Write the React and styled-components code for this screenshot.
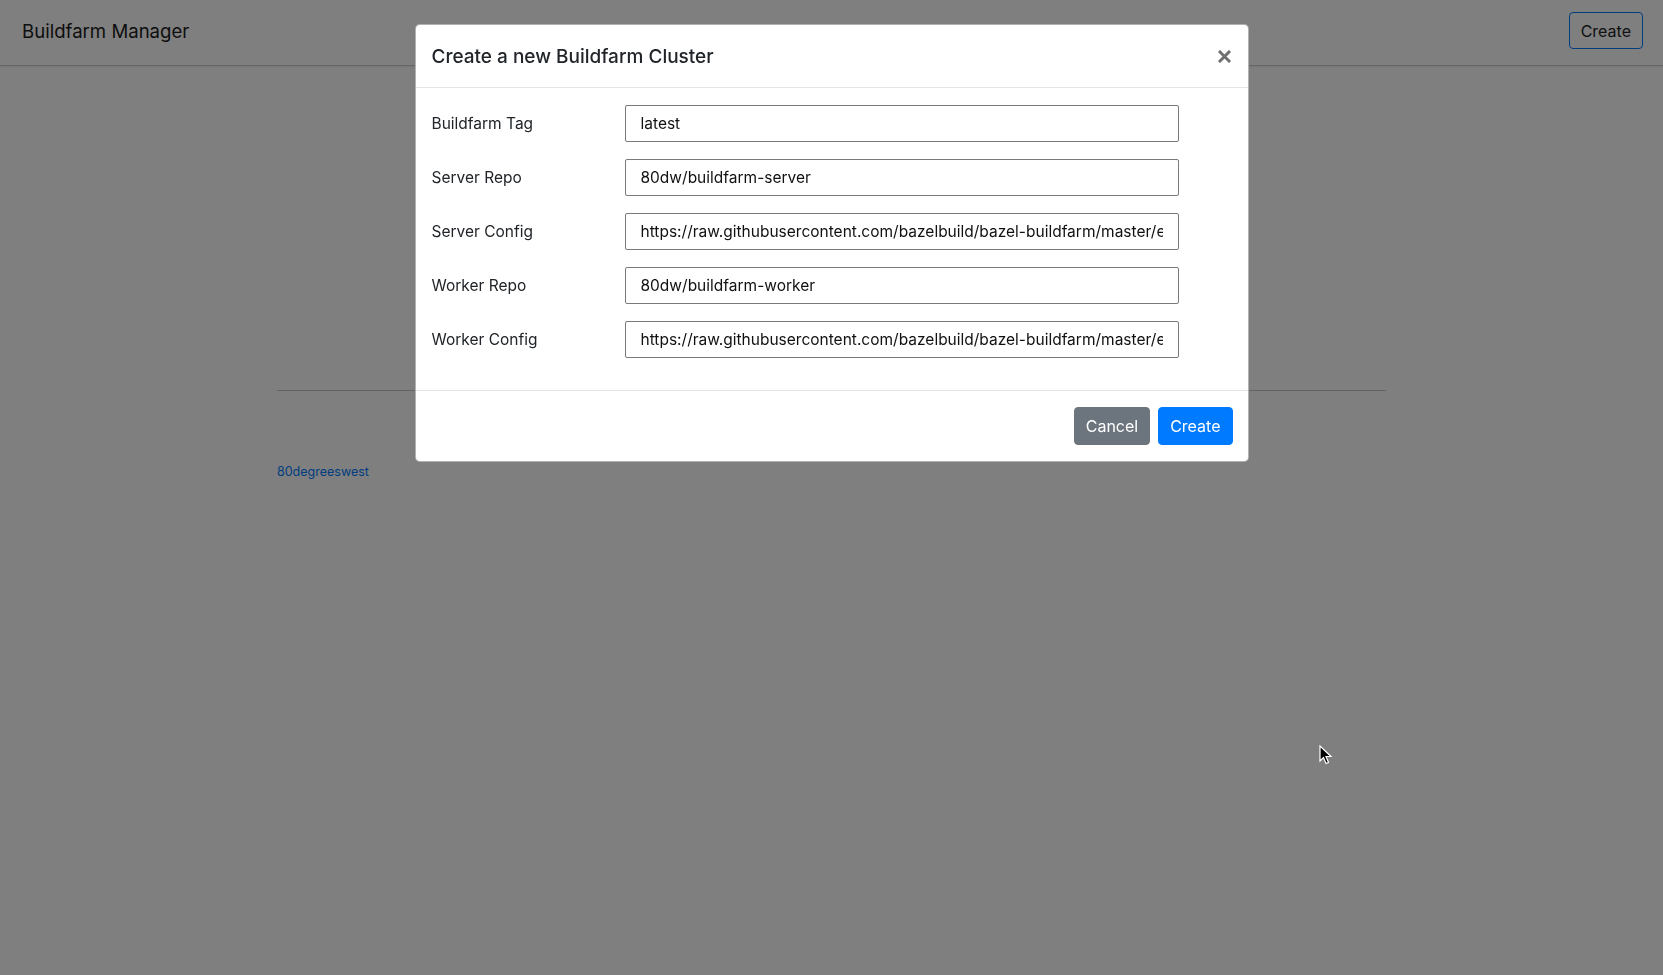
import React from "react";
import styled, { createGlobalStyle } from "styled-components";

const Global = createGlobalStyle`
  html, body { margin: 0; padding: 0; background: #fff; }
  body {
    font-family: Inter, "Noto Sans", "Liberation Sans", sans-serif;
    color: #212529;
    -webkit-font-smoothing: antialiased;
  }
  * { box-sizing: border-box; }
`;

const Page = styled.div`
  min-height: 975px;
  background: #fff;
`;

const Navbar = styled.header`
  height: 66px;
  display: flex;
  align-items: center;
  justify-content: space-between;
  padding: 0 20px 0 22px;
  border-bottom: 1px solid #c8c8c8;
  box-shadow: 0 1px 3px rgba(0, 0, 0, 0.08);
`;

const Brand = styled.div`
  font-size: 18.6px;
  margin-top: -3px;
  color: #1c1c1c;
`;

const Button = styled.button`
  font-family: inherit;
  font-size: 16px;
  height: ${(p) => (p.$tall ? 38 : 37)}px;
  margin-top: ${(p) => (p.$tall ? 0 : -4)}px;
  padding: 0 ${(p) => p.$px || 11}px;
  border-radius: 4px;
  cursor: pointer;
  border: 1px solid ${(p) =>
    p.$variant === "outline" ? "#007bff" : p.$variant === "secondary" ? "#6c757d" : "#007bff"};
  background: ${(p) =>
    p.$variant === "outline" ? "transparent" : p.$variant === "secondary" ? "#6c757d" : "#007bff"};
  color: ${(p) => (p.$variant === "outline" ? "#212529" : "#fff")};
`;

const Container = styled.main`
  width: 1109px;
  margin: 0 auto;
  padding-top: 324px;
`;

const Rule = styled.hr`
  margin: 0;
  border: 0;
  border-top: 1px solid #c4c4c4;
`;

const FooterLink = styled.a`
  display: inline-block;
  margin-top: 73px;
  font-size: 12.5px;
  color: #007bff;
  text-decoration: none;
`;

const Backdrop = styled.div`
  position: fixed;
  inset: 0;
  background: rgba(0, 0, 0, 0.5);
  display: flex;
  justify-content: center;
  align-items: flex-start;
  padding-top: 24px;
`;

const Dialog = styled.div`
  width: 834px;
  background: #fff;
  border: 1px solid rgba(0, 0, 0, 0.3);
  border-radius: 5px;
  display: flex;
  flex-direction: column;
`;

const Header = styled.div`
  height: 63px;
  display: flex;
  align-items: center;
  justify-content: space-between;
  padding: 0 11px 0 16px;
  border-bottom: 1px solid #e2e4e6;
`;

const Title = styled.h5`
  margin: 0;
  font-size: 19px;
  font-weight: 500;
  color: #212529;
`;

const Close = styled.button`
  border: 0;
  background: transparent;
  padding: 0;
  width: 24px;
  height: 24px;
  display: flex;
  align-items: center;
  justify-content: center;
  cursor: pointer;
`;

const Body = styled.div`
  padding: 17px 16px 32px;
  display: flex;
  flex-direction: column;
  gap: 17px;
`;

const Row = styled.div`
  display: grid;
  grid-template-columns: 193px 554px;
  align-items: center;
`;

const Label = styled.label`
  font-size: 15.5px;
  color: #212529;
`;

const Input = styled.input`
  width: 554px;
  height: 37px;
  font-family: inherit;
  font-size: 15.5px;
  color: #111;
  padding: 0 15px;
  border: 1px solid #7a7a7a;
  border-radius: 2px;
  outline: none;
  background: #fff;
`;

const Footer = styled.div`
  border-top: 1px solid #e2e4e6;
  display: flex;
  justify-content: flex-end;
  gap: 8px;
  padding: 16px 15px 16px;
`;

const Cursor = styled.svg`
  position: fixed;
  left: 1319px;
  top: 745px;
`;

const fields = [
  ["Buildfarm Tag", "latest"],
  ["Server Repo", "80dw/buildfarm-server"],
  [
    "Server Config",
    "https://raw.githubusercontent.com/bazelbuild/bazel-buildfarm/master/examples/config.minimal.yml",
  ],
  ["Worker Repo", "80dw/buildfarm-worker"],
  [
    "Worker Config",
    "https://raw.githubusercontent.com/bazelbuild/bazel-buildfarm/master/examples/config.minimal.yml",
  ],
];

export default function App() {
  return (
    <Page>
      <Global />
      <Navbar>
        <Brand>Buildfarm Manager</Brand>
        <Button $variant="outline" $px={11}>Create</Button>
      </Navbar>
      <Container>
        <Rule />
        <FooterLink href="#">80degreeswest</FooterLink>
      </Container>
      <Backdrop>
        <Dialog>
          <Header>
            <Title>Create a new Buildfarm Cluster</Title>
            <Close aria-label="Close">
              <svg width="13" height="13" viewBox="0 0 13 13">
                <path d="M2 2 L11 11 M11 2 L2 11" stroke="#707070" strokeWidth="3" strokeLinecap="square" />
              </svg>
            </Close>
          </Header>
          <Body>
            {fields.map(([label, value]) => (
              <Row key={label}>
                <Label>{label}</Label>
                <Input defaultValue={value} readOnly />
              </Row>
            ))}
          </Body>
          <Footer>
            <Button $variant="secondary" $tall>Cancel</Button>
            <Button $variant="primary" $tall>Create</Button>
          </Footer>
        </Dialog>
      </Backdrop>
      <Cursor width="14" height="20" viewBox="0 0 14 20">
        <path d="M1 1 L1 16 L4.5 12.5 L7 18.5 L9.5 17.5 L7 11.5 L12 11.5 Z" fill="#000" stroke="#fff" strokeWidth="1.2" />
      </Cursor>
    </Page>
  );
}
